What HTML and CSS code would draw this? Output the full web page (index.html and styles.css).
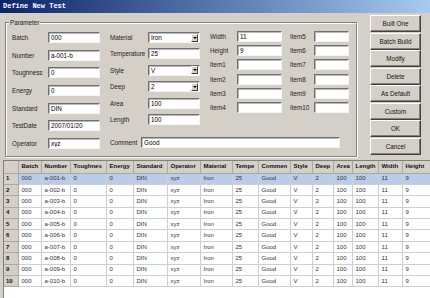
FILE: index.html
```html
<!DOCTYPE html>
<html lang="en">
<head>
<meta charset="UTF-8" />
<title>Define New Test</title>
<link rel="stylesheet" href="styles.css">
</head>
<body>
<div class="window">
  <div class="titlebar">Define New Test</div>

  <div class="main">
    <div class="group">
      <span class="group-title">Parameter</span>
      <div class="group-body">
        <div class="col col-a">
          <div class="field"><label>Batch</label><input class="edit" value="000"></div>
          <div class="field"><label>Number</label><input class="edit" value="a-001-b"></div>
          <div class="field"><label>Toughness</label><input class="edit" value="0"></div>
          <div class="field"><label>Energy</label><input class="edit" value="0"></div>
          <div class="field"><label>Standard</label><input class="edit" value="DIN"></div>
          <div class="field"><label>TestDate</label><input class="edit" value="2007/01/20"></div>
          <div class="field"><label>Operator</label><input class="edit" value="xyz"></div>
        </div>
        <div class="right">
          <div class="right-top">
            <div class="col col-b">
              <div class="field"><label>Material</label><div class="combo"><span>Iron</span><i class="drop"></i></div></div>
              <div class="field"><label>Temperature</label><input class="edit" value="25"></div>
              <div class="field"><label>Style</label><div class="combo"><span>V</span><i class="drop"></i></div></div>
              <div class="field"><label>Deep</label><div class="combo"><span>2</span><i class="drop"></i></div></div>
              <div class="field"><label>Area</label><input class="edit" value="100"></div>
              <div class="field"><label>Length</label><input class="edit" value="100"></div>
            </div>
            <div class="col col-c">
              <div class="field"><label>Width</label><input class="edit" value="11"></div>
              <div class="field"><label>Height</label><input class="edit" value="9"></div>
              <div class="field"><label>Item1</label><input class="edit" value=""></div>
              <div class="field"><label>Item2</label><input class="edit" value=""></div>
              <div class="field"><label>Item3</label><input class="edit" value=""></div>
              <div class="field"><label>Item4</label><input class="edit" value=""></div>
            </div>
            <div class="col col-d">
              <div class="field"><label>Item5</label><input class="edit" value=""></div>
              <div class="field"><label>Item6</label><input class="edit" value=""></div>
              <div class="field"><label>Item7</label><input class="edit" value=""></div>
              <div class="field"><label>Item8</label><input class="edit" value=""></div>
              <div class="field"><label>Item9</label><input class="edit" value=""></div>
              <div class="field"><label>Item10</label><input class="edit" value=""></div>
            </div>
          </div>
          <div class="field comment"><label>Comment</label><input class="edit" value="Good"></div>
        </div>
      </div>
    </div>

    <div class="buttons">
      <button>Built One</button>
      <button>Batch Build</button>
      <button>Modify</button>
      <button>Delete</button>
      <button>As Default</button>
      <button>Custom</button>
      <button>OK</button>
      <button>Cancel</button>
    </div>
  </div>

  <div class="grid-wrap">
    <table class="grid">
      <colgroup>
        <col style="width:14px"><col style="width:23px"><col style="width:29px"><col style="width:36px">
        <col style="width:27px"><col style="width:34px"><col style="width:33px"><col style="width:32px">
        <col style="width:26px"><col style="width:32px"><col style="width:22px"><col style="width:21px">
        <col style="width:19px"><col style="width:26px"><col style="width:24px"><col style="width:28px">
      </colgroup>
      <thead>
        <tr><th></th><th>Batch</th><th>Number</th><th>Toughnes</th><th>Energy</th><th>Standard</th><th>Operator</th><th>Material</th><th>Tempe</th><th>Commen</th><th>Style</th><th>Deep</th><th>Area</th><th>Length</th><th>Width</th><th>Height</th></tr>
      </thead>
      <tbody id="rows"></tbody>
    </table>
  </div>
</div>

<script>
  const body = document.getElementById('rows');
  let html = '';
  for (let i = 1; i <= 10; i++) {
    const num = 'a-' + String(i).padStart(3, '0') + '-b';
    const cells = ['000', num, '0', '0', 'DIN', 'xyz', 'Iron', '25', 'Good', 'V', '2', '100', '100', '11', '9'];
    html += `<tr${i === 1 ? ' class="selected"' : ''}><th>${i}</th>`;
    cells.forEach(c => html += `<td>${c}</td>`);
    html += '</tr>';
  }
  body.innerHTML = html;
</script>
</body>
</html>
```

FILE: styles.css
```css
* { box-sizing: border-box; }
body {
  margin: 0;
  background: #d4d0c8;
  font-family: "Liberation Sans", Arial, sans-serif;
  font-size: 6.3px;
  color: #000;
}
.window {
  width: 430px;
  height: 298px;
  display: flex;
  flex-direction: column;
  overflow: hidden;
}
.titlebar {
  height: 13px;
  line-height: 13px;
  padding-left: 3px;
  background: linear-gradient(to right, #0a246a, #a6caf0);
  color: #fff;
  font-family: "Liberation Mono", monospace;
  font-weight: bold;
  font-size: 7px;
}

.main {
  display: flex;
  align-items: flex-start;
}
.group {
  margin: 9px 0 0 5px;
  width: 352px;
  height: 135px;
  border: 1px solid #808080;
  box-shadow: inset 1px 1px 0 #fff, 1px 1px 0 #fff;
}
.group-title {
  display: block;
  width: fit-content;
  margin: -4px 0 0 3px;
  padding: 0 1px;
  line-height: 7px;
  background: #d4d0c8;
  color: #222;
}
.group-body {
  display: flex;
  align-items: flex-start;
  margin-top: 6px;
  padding-left: 6px;
}
.col {
  display: flex;
  flex-direction: column;
}
.field {
  display: flex;
  align-items: center;
  height: 11px;
}
.field label { color: #222; }
.edit, .combo {
  height: 11px;
  padding: 0 2px;
  border: 1px solid;
  border-color: #707070 #f4f4f4 #f4f4f4 #707070;
  box-shadow: inset 1px 1px 0 #b8b8b8;
  background: #fff;
  font-family: "Liberation Sans", Arial, sans-serif;
  font-size: 6.3px;
  color: #000;
  outline: none;
}
.combo {
  display: flex;
  align-items: center;
  justify-content: space-between;
  padding-right: 1px;
}
.drop {
  width: 7px;
  height: 8px;
  background: #d4d0c8;
  border: 1px solid;
  border-color: #fff #404040 #404040 #fff;
  display: flex;
  align-items: center;
  justify-content: center;
}
.drop::after {
  content: "";
  border-left: 2px solid transparent;
  border-right: 2px solid transparent;
  border-top: 2px solid #000;
}

.col-a { gap: 6.7px; }
.col-a label { width: 36px; }
.col-a .edit { width: 52px; }

.right { margin-left: 10px; }
.right-top {
  display: flex;
  align-items: flex-start;
}
.col-b { gap: 5.4px; }
.col-b label { width: 38px; }
.col-b .edit, .col-b .combo { width: 52px; }

.col-c { margin: -1px 0 0 10px; gap: 3.2px; }
.col-c label { width: 27px; }
.col-c .edit { width: 45px; }

.col-d { margin: -1px 0 0 8px; gap: 3.2px; }
.col-d label { width: 24px; }
.col-d .edit { width: 35px; }

.comment { margin-top: 12px; }
.comment label { width: 31px; }
.comment .edit { width: 199px; }

.buttons {
  display: flex;
  flex-direction: column;
  gap: 0.5px;
  margin: 2px 0 0 13px;
}
.buttons button {
  width: 51px;
  height: 17px;
  padding: 0;
  background: #d4d0c8;
  border: 1px solid;
  border-color: #fff #404040 #404040 #fff;
  box-shadow: inset -1px -1px 0 #808080;
  font-family: "Liberation Sans", Arial, sans-serif;
  font-size: 6.3px;
  color: #111;
}

.grid-wrap {
  flex: 1;
  margin: 3px 0 0 3px;
  background: #fff;
  border-top: 1px solid #808080;
  border-left: 1px solid #808080;
  overflow: hidden;
}
.grid {
  table-layout: fixed;
  border-collapse: collapse;
  width: 426px;
}
.grid th, .grid td {
  padding: 0 0 0 3px;
  text-align: left;
  white-space: nowrap;
  overflow: hidden;
  font-size: 6px;
  line-height: 7px;
}
.grid thead th {
  height: 12px;
  background: #d4d0c8;
  border-right: 1px solid #a8a8a8;
  border-bottom: 1px solid #a8a8a8;
  font-weight: bold;
  color: #111;
}
.grid tbody tr { height: 11.4px; }
.grid tbody th {
  background: #d4d0c8;
  border-right: 1px solid #a8a8a8;
  border-bottom: 1px solid #a8a8a8;
  padding-left: 2px;
  font-weight: bold;
  color: #111;
}
.grid td {
  border-right: 1px solid #cfcfcf;
  border-bottom: 1px solid #cfcfcf;
  color: #333;
}
.grid tr.selected td { background: #b9cce8; }
```
